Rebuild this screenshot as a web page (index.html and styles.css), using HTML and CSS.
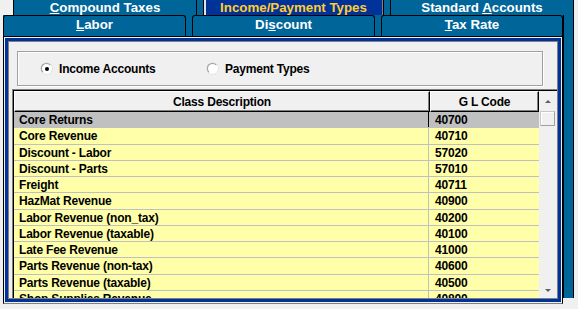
FILE: index.html
```html
<!DOCTYPE html>
<html>
<head>
<meta charset="utf-8">
<title>Income/Payment Types</title>
<link rel="stylesheet" href="styles.css">
</head>
<body>
	<div id="win">
		<div class="tabs back">
			<div class="tab"><u>C</u>ompound Taxes</div>
			<div class="tab on">Income/Payment Types</div>
			<div class="tab">Standard <u>A</u>ccounts</div>
		</div>
		<div class="sheet">
			<div class="main">
				<div class="tabs front">
					<div class="tab"><u>L</u>abor</div>
					<div class="tab">Di<u>s</u>count</div>
					<div class="tab"><u>T</u>ax Rate</div>
				</div>
				<div class="panel">
					<div class="frame">
						<div class="content">
							<div class="group">
								<label class="option"><span class="radio checked"></span>Income Accounts</label>
								<label class="option"><span class="radio"></span>Payment Types</label>
							</div>
							<div class="grid">
								<div class="box">
									<div class="data">
										<div class="head"><span class="desc">Class Description</span><span class="code">G L Code</span></div>
										<ul class="rows">
											<li class="sel"><span class="desc">Core Returns</span><span class="code">40700</span></li>
											<li><span class="desc">Core Revenue</span><span class="code">40710</span></li>
											<li><span class="desc">Discount - Labor</span><span class="code">57020</span></li>
											<li><span class="desc">Discount - Parts</span><span class="code">57010</span></li>
											<li><span class="desc">Freight</span><span class="code">40711</span></li>
											<li><span class="desc">HazMat Revenue</span><span class="code">40900</span></li>
											<li><span class="desc">Labor Revenue (non_tax)</span><span class="code">40200</span></li>
											<li><span class="desc">Labor Revenue (taxable)</span><span class="code">40100</span></li>
											<li><span class="desc">Late Fee Revenue</span><span class="code">41000</span></li>
											<li><span class="desc">Parts Revenue (non-tax)</span><span class="code">40600</span></li>
											<li><span class="desc">Parts Revenue (taxable)</span><span class="code">40500</span></li>
											<li><span class="desc">Shop Supplies Revenue</span><span class="code">40800</span></li>
										</ul>
									</div>
									<div class="scroll">
										<span class="up"></span>
										<span class="thumb"></span>
										<span class="down"></span>
									</div>
								</div>
							</div>
						</div>
					</div>
				</div>
			</div>
			<div class="strip"></div>
		</div>
	</div>
</body>
</html>
```

FILE: styles.css
```css
*{
	margin:0;
	padding:0;
	list-style:none;
	box-sizing:border-box;
}
body{
	background:#f0f0f0;
	font:bold 12px/16px "Liberation Sans",Arial,sans-serif;
	letter-spacing:-0.2px;
	color:#000;
}
#win{
	width:571px;
	margin-left:3px;
}
/* tab rows */
.tabs{
	display:flex;
	background:#006699;
}
.tabs .tab{
	border-left:1px solid #000;
	border-right:1px solid #000;
	color:#fff;
	font-size:13.3px;
	letter-spacing:0;
	text-align:center;
	white-space:nowrap;
	overflow:hidden;
}
.back{
	margin-left:10px;
	height:15px;
	gap:6px;
}
.back .tab{
	width:184px;
	height:15px;
	line-height:16px;
}
.back .tab.on{
	width:181px;
	background:#003399;
	color:#ffcc33;
	box-shadow:inset 2px 0 #e0e0e0,inset -1px 0 #808080;
}
.sheet{
	display:flex;
}
.main{
	width:560px;
}
.front{
	height:21px;
	gap:6px;
}
.front .tab{
	width:183px;
	border-top:1px solid #000;
	border-radius:3px 3px 0 0;
	line-height:18px;
}
.front .tab:last-child{
	width:182px;
}
.strip{
	width:11px;
	margin-bottom:6px;
	background:#006699;
	border-left:1px solid #000;
	border-right:1px solid #000;
}
/* panel frame */
.panel{
	height:268px;
	padding:1px;
	border:1px solid #000;
	border-bottom-color:#808080;
	background:#f0f0f0;
}
.frame{
	height:100%;
	border:3px solid #003399;
}
.content{
	height:100%;
	border:1px solid #808080;
	padding:9px 0 0 3px;
}
.group{
	display:flex;
	align-items:center;
	width:526px;
	height:35px;
	margin-left:5px;
	padding-left:23px;
	border:1px solid #a0a0a0;
	box-shadow:inset 1px 1px #fff,1px 1px #fff;
}
.option{
	display:flex;
	align-items:center;
	width:166px;
}
.radio{
	display:flex;
	align-items:center;
	justify-content:center;
	width:11px;
	height:11px;
	margin-right:7px;
	border-radius:50%;
	border:1px solid;
	border-color:#a0a0a0 #fff #fff #a0a0a0;
	background:#fff;
	box-shadow:0 0 0 0.5px #d0d0d0;
}
.radio.checked::after{
	content:"";
	width:4px;
	height:4px;
	border-radius:50%;
	background:#000;
}
/* list grid */
.grid{
	width:545px;
	height:209px;
	margin-top:3px;
	border-top:1px solid #808080;
	border-left:1px solid #808080;
}
.box{
	display:flex;
	height:100%;
	border-top:1px solid #000;
	border-left:1px solid #000;
}
.data{
	width:525px;
}
.head{
	display:flex;
	height:21px;
}
.head span{
	padding-top:2px;
	line-height:16px;
	text-align:center;
	background:#f0f0f0;
	border-top:1px solid #fff;
	border-left:1px solid #fff;
	border-right:1px solid #000;
	border-bottom:1px solid #000;
	box-shadow:inset -1px -1px #808080;
}
.head .desc{
	width:416px;
}
.head .code{
	width:109px;
}
.rows{
	height:186px;
	overflow:hidden;
}
.rows li{
	display:flex;
	height:16.25px;
	padding-top:1px;
	line-height:14px;
	background:#ffffaa;
	border-bottom:1px solid #c0c0c0;
}
.rows .desc{
	width:415px;
	padding-left:5px;
	margin-top:-1px;
	padding-top:1px;
	border-right:1px solid #c0c0c0;
}
.rows .code{
	width:110px;
	padding-left:6px;
}
.rows li.sel{
	background:#c0c0c0;
}
.rows li.sel .desc{
	border-right-color:#000;
}
.scroll{
	display:flex;
	flex-direction:column;
	align-items:center;
	width:17px;
}
.up{
	margin-top:9px;
	border-left:3px solid transparent;
	border-right:3px solid transparent;
	border-bottom:3px solid #606060;
}
.thumb{
	width:15px;
	height:15px;
	margin-top:8px;
	background:#f0f0f0;
	border:1px solid;
	border-color:#c8c8c8 #a0a0a0 #a0a0a0 #c8c8c8;
	box-shadow:inset 1px 1px #fff;
}
.down{
	margin-top:auto;
	margin-bottom:6px;
	border-left:3px solid transparent;
	border-right:3px solid transparent;
	border-top:3px solid #606060;
}
```
